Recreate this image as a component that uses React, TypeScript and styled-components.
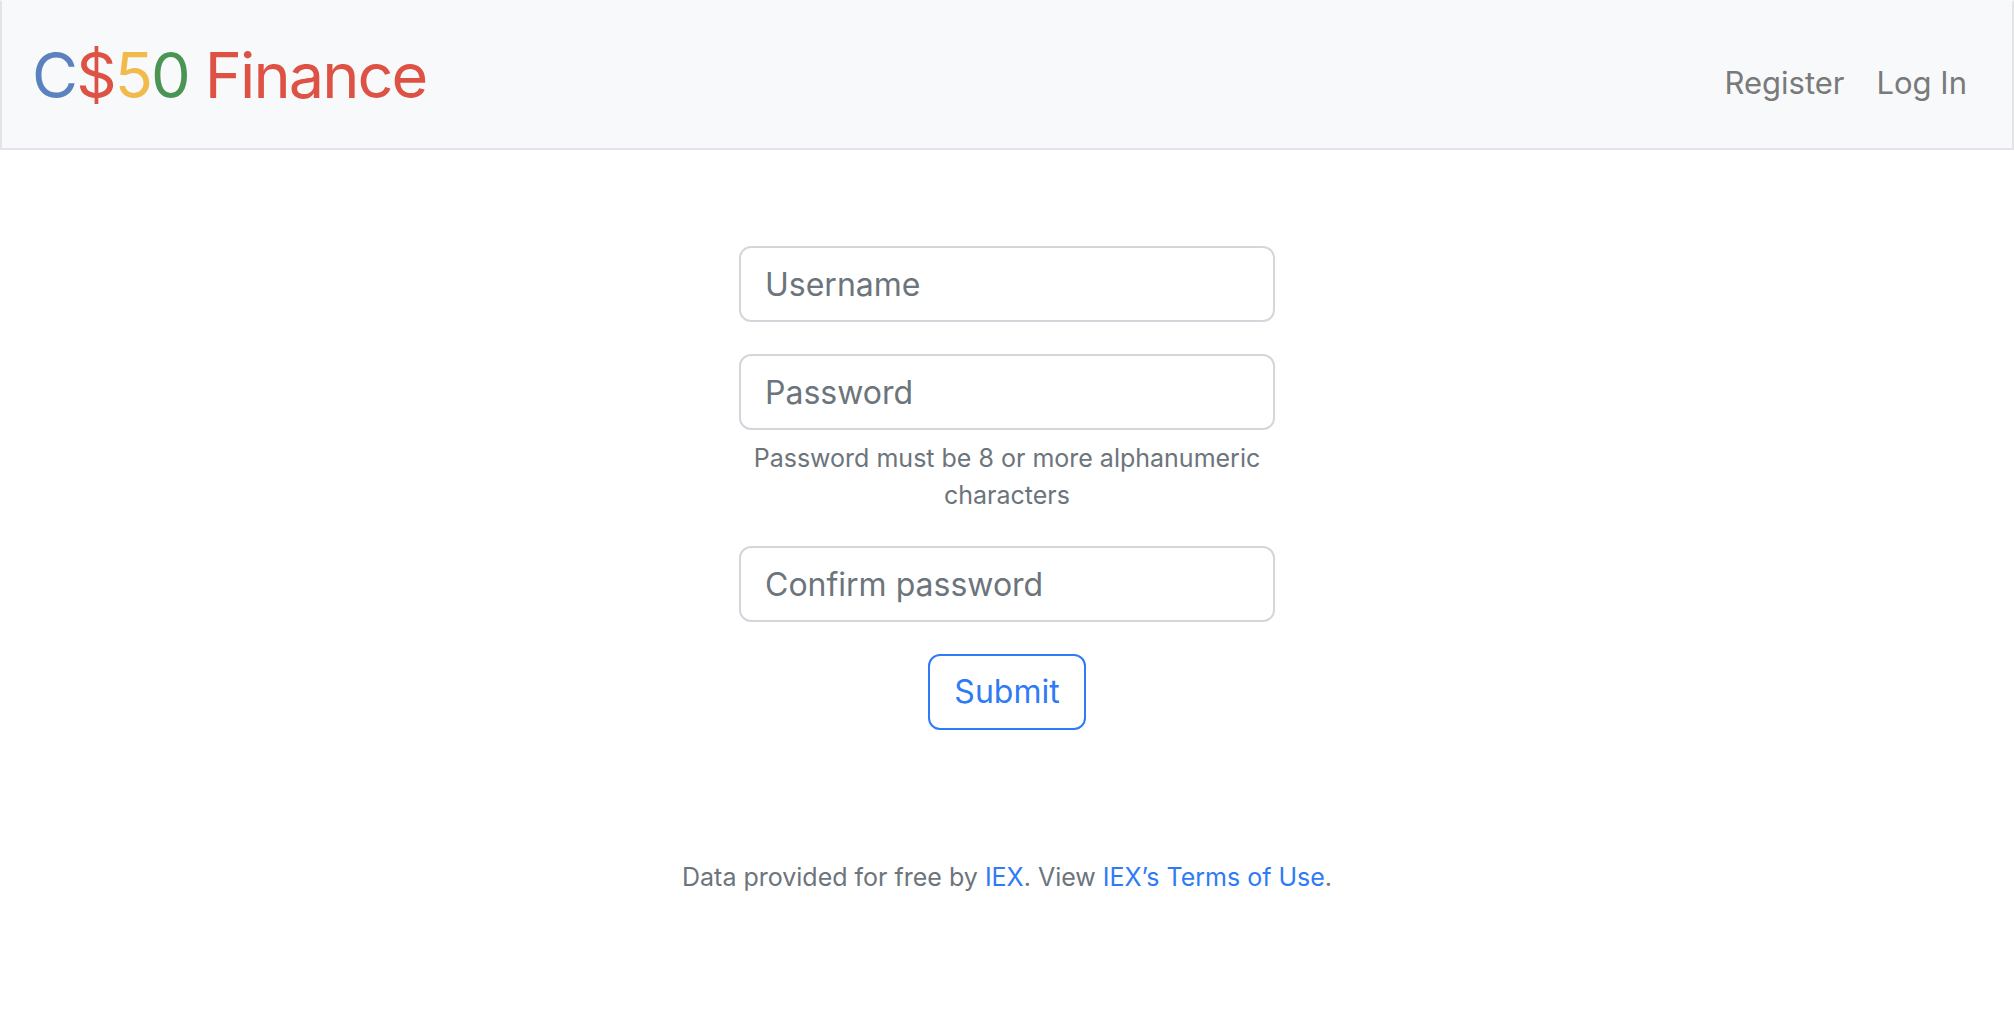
import React from 'react';
import styled, {createGlobalStyle} from "styled-components";

const GlobalStyle = createGlobalStyle`
    body {
        margin: 0;
        background: #ffffff;
        font-family: Inter, "Noto Sans", "Liberation Sans", sans-serif;
        color: #212529;
    }
`

const Brand = () => {
    return (
        <BrandLink href="#">
            <Letter color="#5b82bf">C</Letter>
            <Letter color="#dd5244">$</Letter>
            <Letter color="#f1bb4c">5</Letter>
            <Letter color="#4b9554">0</Letter>
            {' '}
            <Letter color="#dd5244">Finance</Letter>
        </BrandLink>
    );
};

const Field = ({placeholder, type}: { placeholder: string, type: string }) => {
    return <Input type={type} placeholder={placeholder} autoComplete="off"/>;
};

export default function App() {
    return (
        <>
            <GlobalStyle/>
            <Navbar>
                <Brand/>
                <NavList>
                    <NavItem><NavLink href="#">Register</NavLink></NavItem>
                    <NavItem><NavLink href="#">Log In</NavLink></NavItem>
                </NavList>
            </Navbar>
            <Main>
                <Form onSubmit={e => e.preventDefault()}>
                    <Group>
                        <Field type="text" placeholder="Username"/>
                    </Group>
                    <Group>
                        <Field type="password" placeholder="Password"/>
                        <Hint>Password must be 8 or more alphanumeric characters</Hint>
                    </Group>
                    <Group>
                        <Field type="password" placeholder="Confirm password"/>
                    </Group>
                    <SubmitButton type="submit">Submit</SubmitButton>
                </Form>
            </Main>
            <Footer>
                Data provided for free by <FooterLink href="#">IEX</FooterLink>. View <FooterLink href="#">IEX’s Terms of Use</FooterLink>.
            </Footer>
        </>
    );
}

const Navbar = styled.nav`
    display: flex;
    align-items: center;
    justify-content: space-between;
    padding: 15px 29px 15px 30px;
    background: #f8f9fa;
    border: 2px solid #e2e4e7;
    border-top-color: #f8f9fa;
`
const BrandLink = styled.a`
    display: block;
    padding: 10px 0;
    font-size: 63px;
    line-height: 96px;
    letter-spacing: -1.9px;
    text-decoration: none;
    white-space: nowrap;
`
const Letter = styled.span<{ color: string }>`
    color: ${props => props.color};
`
const NavList = styled.ul`
    display: flex;
    list-style: none;
    margin: 16px 0 0;
    padding: 0;
`
const NavItem = styled.li`
    display: block;
`
const NavLink = styled.a`
    display: block;
    padding: 16px;
    font-size: 31px;
    line-height: 48px;
    color: #7a7a7a;
    text-decoration: none;
`
const Main = styled.main`
    padding: 96px 24px 96px;
    text-align: center;
`
const Form = styled.form`
    display: flex;
    flex-direction: column;
    align-items: center;
`
const Group = styled.div`
    display: flex;
    flex-direction: column;
    align-items: center;
    width: 536px;
    margin-bottom: 32px;
`
const Input = styled.input`
    box-sizing: border-box;
    width: 536px;
    height: 76px;
    padding: 12px 24px;
    font-family: inherit;
    font-size: 32px;
    line-height: 48px;
    color: #212529;
    background: #ffffff;
    border: 2px solid #d3d7db;
    border-radius: 12px;
    outline: none;

    &::placeholder {
        color: #6c747c;
    }
`
const Hint = styled.div`
    margin-top: 10px;
    font-size: 25px;
    line-height: 37px;
    color: #6c747c;
`
const SubmitButton = styled.button`
    box-sizing: border-box;
    height: 76px;
    padding: 12px 24px;
    font-family: inherit;
    font-size: 32px;
    line-height: 48px;
    color: #2f7bf5;
    background: transparent;
    border: 2px solid #2f7bf5;
    border-radius: 12px;
    cursor: pointer;
`
const Footer = styled.footer`
    margin-top: 33px;
    font-size: 25px;
    line-height: 36px;
    text-align: center;
    color: #6c747c;
`
const FooterLink = styled.a`
    color: #2f7bf5;
    text-decoration: none;
`
